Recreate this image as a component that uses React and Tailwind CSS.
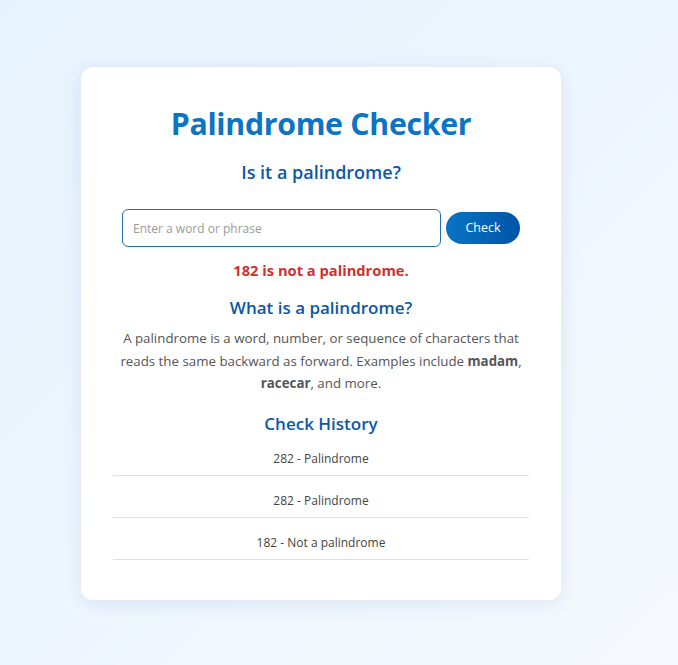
import { useState } from "react";

const history = [
  "282 - Palindrome",
  "282 - Palindrome",
  "182 - Not a palindrome",
];

export default function App() {
  const [value, setValue] = useState("");

  return (
    <div
      className="flex min-h-[665px] items-center bg-gradient-to-br from-[#e6f2fd] to-[#f5f9fe] pl-[81px] pt-[2px]"
      style={{ fontFamily: '"Open Sans", "Noto Sans", sans-serif' }}
    >
      <div className="flex h-[533px] w-[480px] flex-col items-center rounded-xl bg-white px-8 pt-[35px] shadow-[0_4px_18px_rgba(30,80,140,0.10)]">
        <h1 className="text-[30.3px] font-bold leading-[44px] tracking-[-0.3px] text-[#0b74c5]">
          Palindrome Checker
        </h1>
        <h2 className="mt-[13px] text-[18px] font-semibold leading-[26px] text-[#0c58a6]">
          Is it a palindrome?
        </h2>

        {/* Input row */}
        <div className="mt-[24px] flex w-[398px] items-center gap-[5px]">
          <input
            value={value}
            onChange={(e) => setValue(e.target.value)}
            placeholder="Enter a word or phrase"
            className="h-[38px] flex-1 rounded-md border border-[#1f6fb2] px-[10px] text-[12px] text-gray-700 placeholder:text-[#9a9a9a] focus:outline-none"
          />
          <button className="h-[32px] w-[74px] rounded-full bg-gradient-to-r from-[#0a74c4] to-[#0055a6] text-[12.5px] text-white">
            Check
          </button>
        </div>

        <p className="mt-[13px] text-[14.7px] font-bold leading-[20px] text-[#cf3030]">
          182 is not a palindrome.
        </p>

        <h3 className="mt-[16px] text-[17px] font-semibold leading-[24px] text-[#0c58a6]">
          What is a palindrome?
        </h3>
        <p className="mt-[7px] max-w-[404px] text-center text-[13.3px] leading-[22.5px] text-[#555]">
          A palindrome is a word, number, or sequence of characters that
          reads the same backward as forward. Examples include{" "}
          <strong className="font-bold">madam</strong>,{" "}
          <strong className="font-bold">racecar</strong>, and more.
        </p>

        <h3 className="mt-[19px] text-[17px] font-semibold leading-[20px] text-[#0c58a6]">
          Check History
        </h3>
        <ul className="w-full">
          {history.map((item, i) => (
            <li
              key={i}
              className="border-b border-[#e0e0e0] pb-[7px] pt-[16px] text-center text-[12px] leading-[18px] text-[#444]"
            >
              {item}
            </li>
          ))}
        </ul>
      </div>
    </div>
  );
}
